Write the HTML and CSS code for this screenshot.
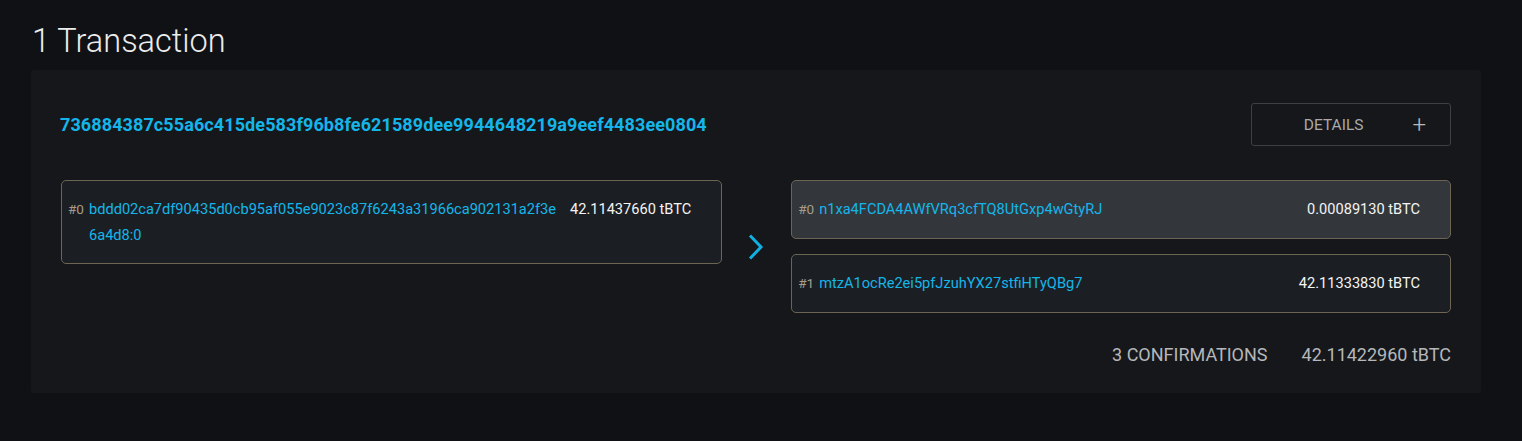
FILE: index.html
```html
<!DOCTYPE html>
<html lang="en">
<head>
<meta charset="utf-8">
<title>1 Transaction</title>
<link rel="stylesheet" href="styles.css">
</head>
<body>
<main class="page">
  <h1 class="title">1 Transaction</h1>
  <section class="tx-card">
    <div class="tx-head">
      <a class="txid" href="#">736884387c55a6c415de583f96b8fe621589dee9944648219a9eef4483ee0804</a>
      <button class="details-btn" type="button"><span>DETAILS</span><span class="plus">+</span></button>
    </div>
    <div class="tx-body">
      <div class="ins">
        <div class="io-box">
          <span class="idx">#0</span>
          <a class="addr in-addr" href="#">bddd02ca7df90435d0cb95af055e9023c87f6243a31966ca902131a2f3e6a4d8:0</a>
          <span class="amt">42.11437660 tBTC</span>
        </div>
      </div>
      <div class="arrow">
        <svg width="20" height="28" viewBox="0 0 20 28"><path d="M4 2.5 L15 14 L4 25.5" fill="none" stroke="#10b0e2" stroke-width="3"/></svg>
      </div>
      <div class="outs">
        <div class="io-box out-box active">
          <span class="idx">#0</span>
          <a class="addr" href="#">n1xa4FCDA4AWfVRq3cfTQ8UtGxp4wGtyRJ</a>
          <span class="amt">0.00089130 tBTC</span>
        </div>
        <div class="io-box out-box">
          <span class="idx">#1</span>
          <a class="addr" href="#">mtzA1ocRe2ei5pfJzuhYX27stfiHTyQBg7</a>
          <span class="amt">42.11333830 tBTC</span>
        </div>
      </div>
    </div>
    <div class="tx-foot">
      <span>3 CONFIRMATIONS</span>
      <span>42.11422960 tBTC</span>
    </div>
  </section>
</main>
</body>
</html>
```

FILE: styles.css
```css
html, body {
  margin: 0;
  padding: 0;
  background: #101115;
  font-family: Roboto, "Liberation Sans", sans-serif;
  color: #e6e6e6;
}

.page {
  padding: 0 41px 0 31px;
}

.title {
  margin: 0;
  padding-top: 22px;
  padding-left: 1px;
  height: 70px;
  box-sizing: border-box;
  font-size: 32.5px;
  font-weight: 300;
  line-height: 38px;
  color: #ececec;
}

.tx-card {
  background: #15171b;
  border-radius: 3px;
  padding: 33px 30px 26px 30px;
}

.tx-head {
  display: flex;
  align-items: center;
  justify-content: space-between;
  height: 43px;
}

.txid {
  color: #14b6ea;
  font-weight: 700;
  font-size: 18px;
  letter-spacing: 0.1px;
  text-decoration: none;
  margin-left: -1px;
}

.details-btn {
  width: 200px;
  height: 43px;
  background: transparent;
  border: 1px solid #3d3f44;
  border-radius: 3px;
  color: #a8aaad;
  font-family: inherit;
  font-size: 15.5px;
  display: flex;
  align-items: center;
  justify-content: flex-end;
  padding: 0 24px 0 0;
  gap: 49px;
}

.plus {
  font-size: 24px;
  font-weight: 300;
  color: #b7b9bc;
  line-height: 1;
}

.tx-body {
  display: grid;
  grid-template-columns: 1fr 69px 1fr;
  margin-top: 34px;
}

.ins {
  align-self: start;
}

.arrow {
  align-self: center;
  display: flex;
  justify-content: center;
  padding-right: 2px;
}

.outs {
  display: flex;
  flex-direction: column;
  gap: 15px;
}

.io-box {
  display: flex;
  align-items: flex-start;
  background: #1b1f23;
  border: 1px solid #6c6553;
  border-radius: 5px;
  padding: 15px 30px 15px 6px;
  font-size: 14.6px;
  line-height: 26px;
}

.out-box {
  padding-bottom: 16px;
}

.io-box.active {
  background: #33373b;
}

.idx {
  width: 21px;
  flex: none;
  color: #a69d8c;
  font-size: 13.5px;
}

.addr {
  flex: 1;
  min-width: 0;
  color: #14b6ea;
  text-decoration: none;
  word-break: break-all;
}

.in-addr {
  flex: none;
  width: 470px;
  margin-right: 11px;
}

.amt {
  flex: none;
  white-space: nowrap;
  color: #f4f4f4;
  text-align: right;
}

.tx-foot {
  display: flex;
  justify-content: flex-end;
  gap: 34px;
  margin-top: 30px;
  font-size: 18px;
  line-height: 24px;
  color: #b5b7ba;
}
```
